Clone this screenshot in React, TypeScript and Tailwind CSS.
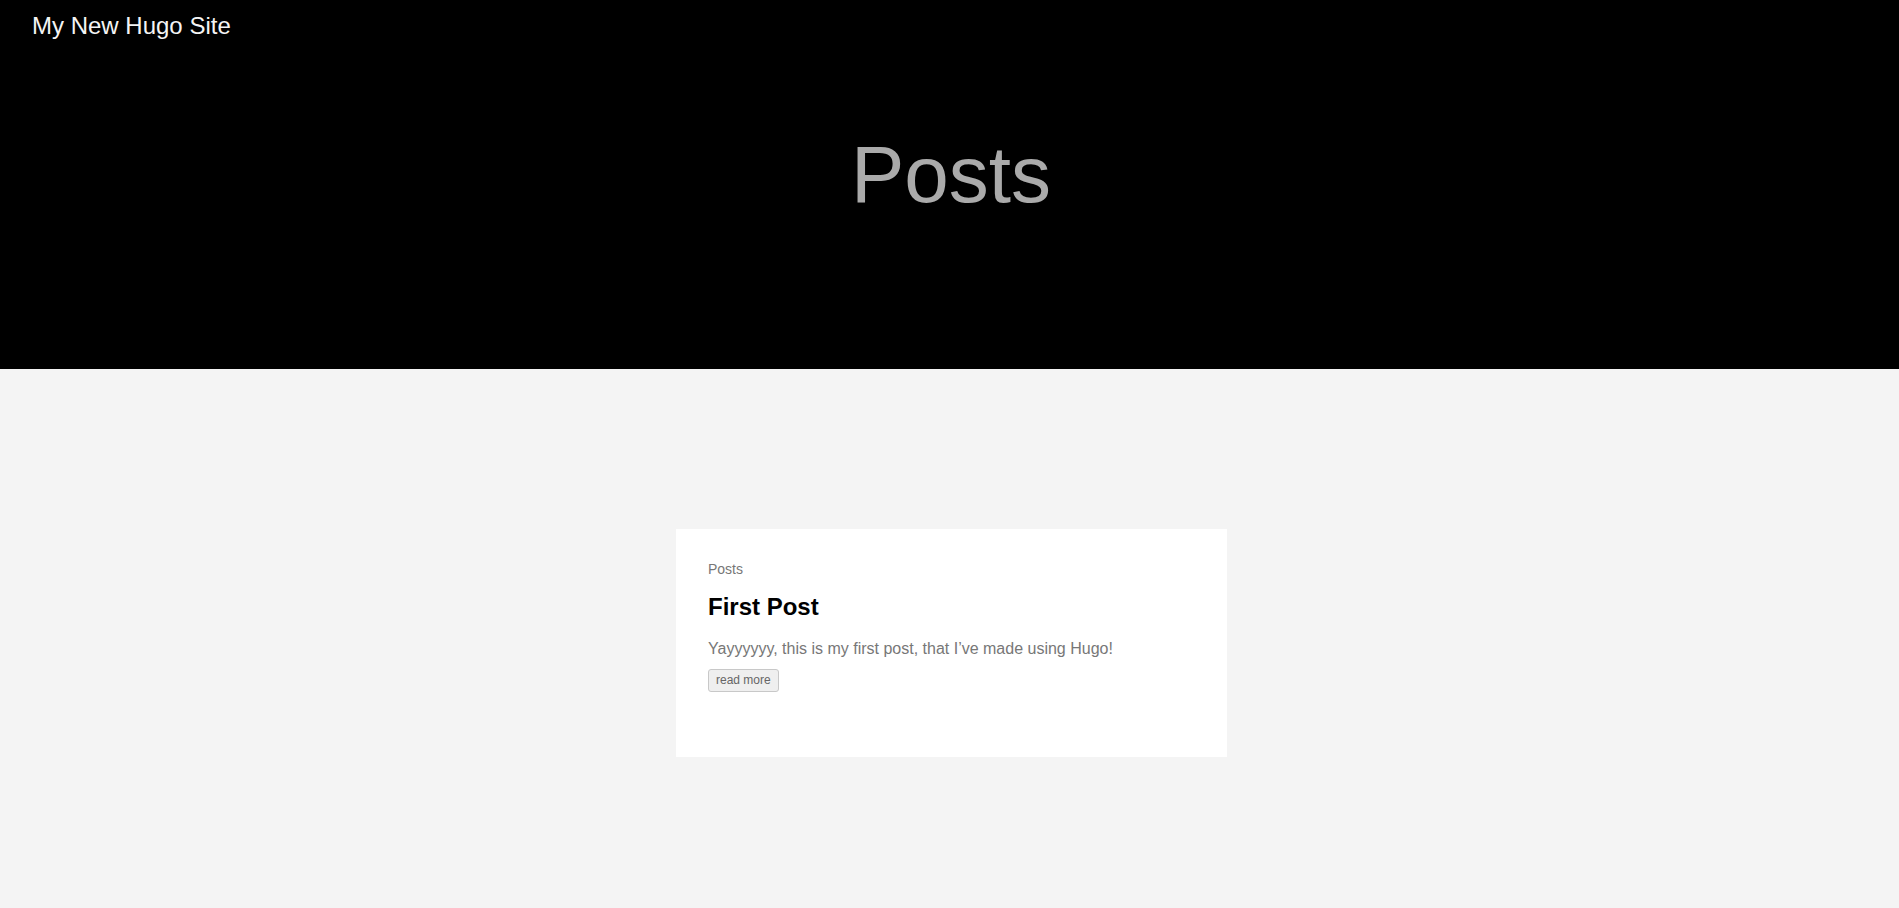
import React from "react";

const font = { fontFamily: '"Liberation Sans", Arial, sans-serif' };

const posts = [
  {
    section: "Posts",
    title: "First Post",
    summary: "Yayyyyyy, this is my first post, that I’ve made using Hugo!",
  },
];

const App = () => {
  return (
    <div className="min-h-[908px] bg-[#f4f4f4]" style={font}>
      <header className="h-[369px] bg-black">
        <div className="pl-[32px] pt-[12px] text-[24px] leading-[27px] text-[#f4f4f4]">
          My New Hugo Site
        </div>
        <h1 className="mt-[96px] pl-[3px] text-center text-[80px] leading-[80px] text-[#aaaaaa]">
          Posts
        </h1>
      </header>

      <main className="flex flex-col items-center pl-[4px] pt-[160px] pb-[100px]">
        {posts.map((post) => (
          <article
            key={post.title}
            className="w-[551px] bg-white pl-[32px] pr-[32px] pt-[30px] pb-[65px]"
          >
            <div className="text-[14px] leading-[20px] text-[#777777]">
              {post.section}
            </div>
            <h2 className="mt-[13px] text-[24px] font-bold leading-[30px] text-black">
              {post.title}
            </h2>
            <p className="mt-[15px] text-[16px] leading-[24px] text-[#777777]">
              {post.summary}
            </p>
            <button className="mt-[8px] h-[23px] rounded-[3px] border border-[#c8c8c8] bg-[#efefef] px-[7px] text-[12px] leading-[21px] text-[#666666]">
              read more
            </button>
          </article>
        ))}
      </main>
    </div>
  );
};

export default App;
